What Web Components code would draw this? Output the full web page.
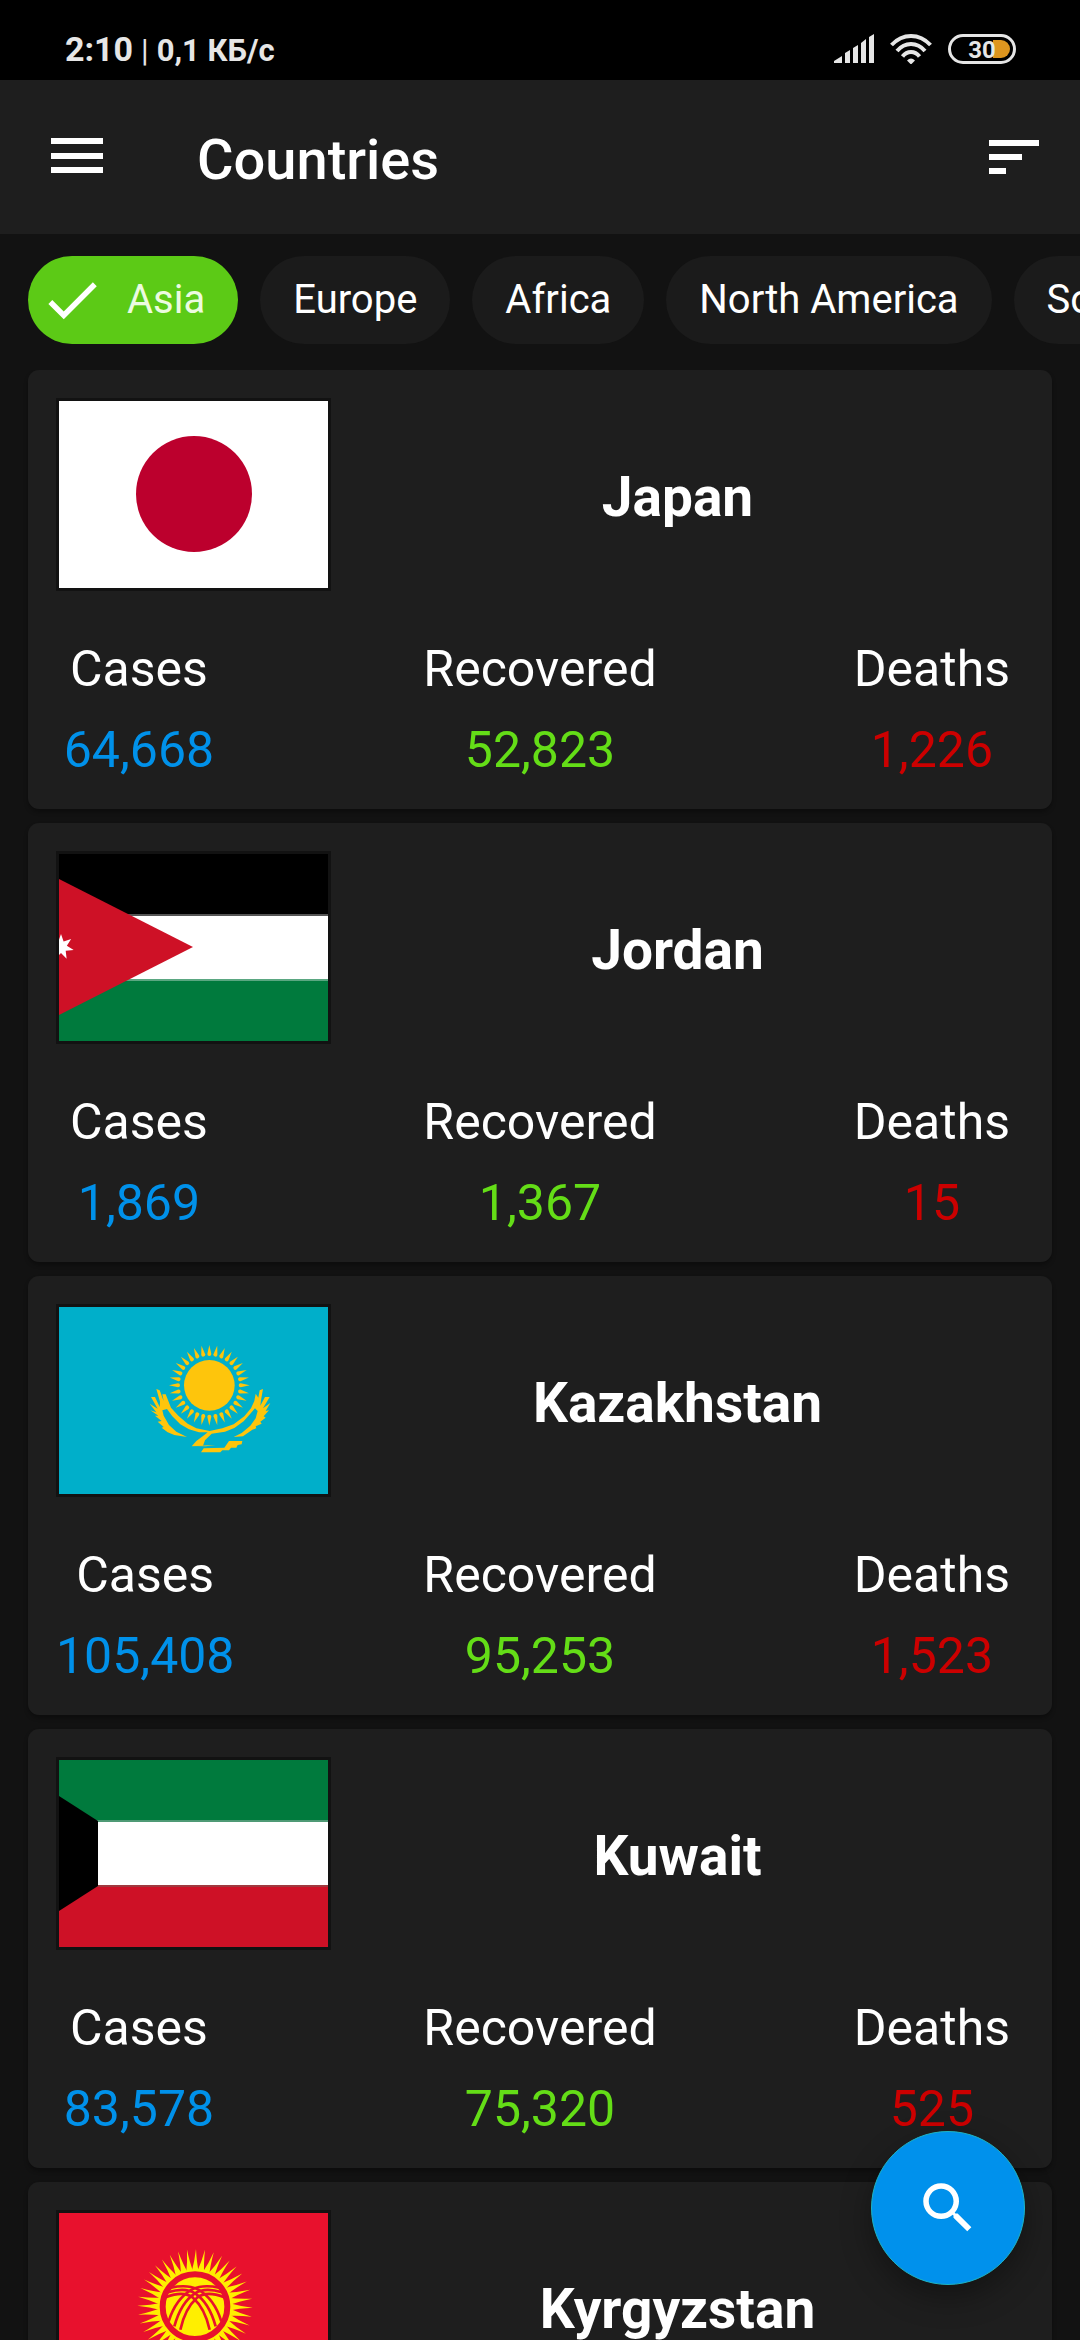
<!DOCTYPE html>
<html lang="en">
<head>
<meta charset="utf-8">
<meta name="viewport" content="width=device-width, initial-scale=1">
<title>Countries</title>
<style>
  :root {
    --bg: #121212;
    --surface: #1e1e1e;
    --chip: #1b1b1b;
    --green: #64dd17;
    --blue: #0091ea;
    --red: #cc0000;
    --edge: 28px;
  }
  html, body { margin: 0; height: 100%; background: var(--bg); }
  body { font-family: Roboto, "Noto Sans", sans-serif; color: #fff; }
</style>
</head>
<body>
<covid-app>
  <status-bar slot="top"></status-bar>
  <app-bar slot="top">Countries</app-bar>
  <chip-row slot="top">
    <region-chip selected>Asia</region-chip>
    <region-chip>Europe</region-chip>
    <region-chip>Africa</region-chip>
    <region-chip>North America</region-chip>
    <region-chip>South America</region-chip>
  </chip-row>
  <country-card flag="jp" cases="64,668" recovered="52,823" deaths="1,226">Japan</country-card>
  <country-card flag="jo" cases="1,869" recovered="1,367" deaths="15">Jordan</country-card>
  <country-card flag="kz" cases="105,408" recovered="95,253" deaths="1,523">Kazakhstan</country-card>
  <country-card flag="kw" cases="83,578" recovered="75,320" deaths="525">Kuwait</country-card>
  <country-card flag="kg" cases="43,245" recovered="39,508" deaths="1,060">Kyrgyzstan</country-card>
  <search-fab slot="fab"></search-fab>
</covid-app>

<script>
  const define = (name, render) => customElements.define(name, class extends HTMLElement {
    connectedCallback() {
      if (this.shadowRoot) return;
      this.attachShadow({ mode: 'open' }).innerHTML = render(this);
    }
  });

  /* ---------- flags ---------- */
  const polar = (cx, cy, r, deg) => {
    const a = deg * Math.PI / 180;
    return (cx + r * Math.sin(a)).toFixed(2) + ' ' + (cy - r * Math.cos(a)).toFixed(2);
  };
  const repeat = (n, fn) => Array.from({ length: n }, (_, i) => fn(i)).join('');

  // seven-pointed star
  const star = 'M' + Array.from({ length: 14 }, (_, i) =>
    polar(2, 93, i % 2 ? 6 : 13, i * 360 / 14)).join('L') + 'Z';

  // tapered rays round the Kazakh sun
  const kzRays = repeat(32, i =>
    `<path transform="rotate(${i * 11.25} 451 235)" d="M451 114L457 141Q457 147 451 147Q445 147 445 141Z"/>`);

  // slightly bent rays round the Kyrgyz sun
  const kgRays = repeat(40, i =>
    `<path transform="rotate(${i * 9} 408 281)" d="M397 180Q407 145 411 108Q413 150 420 180Z"/>`);

  // one set of tunduk laths, mirrored for the other
  const laths = `
    <path d="M329 325Q350 258 398 230Q430 213 480 224"/>
    <path d="M346 340Q366 268 408 241Q438 222 489 238"/>
    <path d="M364 350Q378 286 414 254Q442 232 494 252" />`;

  const flags = {
    jp: `<rect width="269" height="187" fill="#fff"/><circle cx="135" cy="93" r="58" fill="#bc002d"/>`,
    jo: `<rect width="269" height="61" fill="#000"/><rect y="61" width="269" height="65" fill="#fff"/>
         <rect y="126" width="269" height="61" fill="#007a3d"/>
         <path d="M0 60h269v2H0z" fill="#555"/><path d="M0 125h269v2H0z" fill="#5aa781"/>
         <path d="M0 25L134 93L0 161Z" fill="#ce1126"/><path d="${star}" fill="#fff"/>`,
    kz: `<rect width="269" height="187" fill="#00afca"/>
         <g transform="scale(.33333)" fill="#fec50c">
           <circle cx="451" cy="235" r="76"/>${kzRays}
           <path d="M292 246L303 284L302 300L288 270L276 270L296 305L272 290L292 316L274 310L298 326L288 326L308 342L296 344L314 360L308 362L326 376L346 384L384 390L352 374L330 354L314 326L310 310L324 306L340 328L364 352L390 367L420 376L446 376L436 384L412 402L398 418L432 416L438 400L458 380L498 374L526 363L554 343L574 320L588 304L596 312L590 334L574 356L548 378L524 390L552 388L580 368L592 364L590 358L608 350L604 344L620 332L614 328L630 310L620 312L634 288L612 304L632 270L618 270L604 296L606 280L612 246L602 250L598 272L590 260L586 282L576 304L556 328L524 352L490 364L452 372L412 364L386 350L358 326L336 302L320 262L310 262L314 282L302 250Z"/>
           <path d="M400 417L470 414L440 418ZM426 436L434 424L496 422L510 402L550 402L548 412L536 414L532 422L516 422L510 430L490 430L484 436Z"/>
         </g>`,
    kw: `<rect width="269" height="61" fill="#007a3d"/><rect y="61" width="269" height="65" fill="#fff"/>
         <rect y="126" width="269" height="61" fill="#ce1126"/>
         <path d="M0 60h269v2H0z" fill="#4f9a75"/><path d="M0 125h269v2H0z" fill="#a0393f"/>
         <path d="M0 36L39 61V126L0 151Z" fill="#000"/>`,
    kg: `<rect width="269" height="187" fill="#e8112d"/>
         <g transform="scale(.33333)">
           <g fill="#ffef00">${kgRays}<circle cx="408" cy="281" r="107"/></g>
           <circle cx="408" cy="281" r="97" fill="#ffef00" stroke="#e8112d" stroke-width="18"/>
           <g fill="none" stroke="#e8112d" stroke-width="8">${laths}
             <g transform="matrix(-1 0 0 1 816 0)">${laths}</g></g>
         </g>`
  };

  define('country-flag', el => `
    <style>
      :host { display: block; flex: none; border: 3px solid #121212; }
      svg { display: block; width: 269px; height: 187px; }
    </style>
    <svg viewBox="0 0 269 187" aria-hidden="true">${flags[el.getAttribute('code')]}</svg>`);

  /* ---------- frame ---------- */
  define('covid-app', () => `
    <style>
      :host { display: flex; flex-direction: column; height: 100vh; overflow: hidden; background: var(--bg); }
      header { flex: none; }
      main { flex: 1; min-height: 0; overflow-y: auto; scrollbar-width: none;
             display: flex; flex-direction: column; gap: 14px; padding: 0 var(--edge) 14px; }
      ::slotted(search-fab) { position: fixed; right: 55px; bottom: 55px; }
    </style>
    <header><slot name="top"></slot></header>
    <main><slot></slot></main>
    <slot name="fab"></slot>`);

  define('status-bar', () => `
    <style>
      :host { display: flex; align-items: center; justify-content: space-between; height: 80px;
              box-sizing: border-box; padding: 18px 64px 0 65px; background: #000; color: #e6e6e6; font-weight: 700; }
      .left { display: flex; align-items: baseline; gap: 8px; padding-top: 2px; font-size: 31px; line-height: 40px; }
      time { font-size: 34px; }
      .bar { font-weight: 400; }
      .right { display: flex; gap: 16px; }
      svg { display: block; }
    </style>
    <div class="left"><time>2:10</time><span class="bar">|</span><span>0,1 КБ/с</span></div>
    <div class="right">
      <svg width="40" height="30" viewBox="0 0 40 30" fill="#e6e6e6" aria-hidden="true">
        <path d="M0 27l8-5v7H0zM11 19l5-3v13h-5zM19 14l5-3v18h-5zM27 9l5-4v24h-5zM35 3l5-3v29h-5z"/>
      </svg>
      <svg width="42" height="30" viewBox="0 0 42 30" fill="none" stroke="#e6e6e6" stroke-width="4" aria-hidden="true">
        <path d="M1.5 11Q10 2 21 2T40.5 11M7 17Q13 10 21 10T35 17M12.5 22.5Q16 18 21 18T29.5 22.5"/>
        <path d="M17 26.5Q21 22.5 25 26.5L21 30.5Z" fill="#e6e6e6" stroke="none"/>
      </svg>
      <svg width="68" height="30" viewBox="0 0 68 30" aria-label="Battery">
        <rect x="1.5" y="1.5" width="65" height="27" rx="13.5" fill="none" stroke="#e6e6e6" stroke-width="3"/>
        <path d="M45 6h8a9 9 0 0 1 0 18h-8z" fill="#dd961f"/>
        <text x="34" y="24" text-anchor="middle" font-family="Roboto, sans-serif" font-size="24" font-weight="700" fill="#e6e6e6">30</text>
      </svg>
    </div>`);

  define('app-bar', () => `
    <style>
      :host { display: flex; align-items: center; height: 154px; box-sizing: border-box;
              padding: 0 33px 0 44px; background: var(--surface); }
      button { all: unset; display: block; cursor: pointer; }
      svg { display: block; fill: #fff; }
      h1 { flex: 1; margin: 0; padding: 6px 0 0 87px; font-size: 56px; font-weight: 500; line-height: 64px; }
    </style>
    <button aria-label="Menu"><svg width="66" height="66" viewBox="0 0 66 66"><path d="M7 14h52v6H7zM7 29h52v6H7zM7 43h52v6H7z"/></svg></button>
    <h1><slot></slot></h1>
    <button aria-label="Sort"><svg width="66" height="66" viewBox="0 0 66 66"><path d="M8 16h50v6H8zM8 30h33v6H8zM8 44h17v6H8z"/></svg></button>`);

  define('chip-row', () => `
    <style>
      :host { display: flex; gap: 22px; padding: 22px var(--edge) 26px; overflow-x: auto; scrollbar-width: none; }
    </style>
    <slot></slot>`);

  define('region-chip', el => {
    const on = el.hasAttribute('selected');
    return `
    <style>
      :host { display: block; flex: none; }
      button { display: flex; align-items: center; gap: 22px; height: 88px; margin: 0; padding: 0 33px;
               border: 0; border-radius: 44px; background: var(--chip); color: #fff;
               font: 400 40px/46px Roboto, "Noto Sans", sans-serif; white-space: nowrap; }
      button[aria-pressed="true"] { padding-left: 11px; background: #5cca16; color: #ecfbe0; }
      svg { width: 66px; height: 66px; fill: #fff; }
    </style>
    <button aria-pressed="${on}">
      ${on ? '<svg viewBox="0 0 24 24" aria-hidden="true"><path d="M9 16.17L4.83 12l-1.42 1.41L9 19 21 7l-1.41-1.41z"/></svg>' : ''}
      <span><slot></slot></span>
    </button>`;
  });

  define('country-card', el => {
    const stat = (label, key) => `<div class="${key}"><dt>${label}</dt><dd>${el.getAttribute(key)}</dd></div>`;
    return `
    <style>
      :host { display: flex; flex-direction: column; flex: none; gap: 47px; padding: 28px;
              border-radius: 11px; background: var(--surface); box-shadow: 0 3px 4px rgba(0,0,0,.3); }
      .head { display: flex; align-items: center; }
      h2 { flex: 1; margin: 0; padding-top: 4px; text-align: center; font-size: 55px; font-weight: 700; line-height: 64px; }
      dl { display: grid; grid-template-columns: 1fr auto 1fr; margin: 0; font-size: 50px; line-height: 62px; text-align: center; }
      dl div { display: flex; flex-direction: column; gap: 19px; }
      dt { padding: 0 14px; }
      dd { margin: 0; }
      .cases { justify-self: start; }
      .deaths { justify-self: end; }
      .cases dd { color: var(--blue); }
      .recovered dd { color: var(--green); }
      .deaths dd { color: var(--red); }
    </style>
    <div class="head"><country-flag code="${el.getAttribute('flag')}"></country-flag><h2><slot></slot></h2></div>
    <dl>${stat('Cases', 'cases')}${stat('Recovered', 'recovered')}${stat('Deaths', 'deaths')}</dl>`;
  });

  define('search-fab', () => `
    <style>
      :host { display: block; }
      button { display: grid; place-items: center; width: 154px; height: 154px; margin: 0; padding: 0;
               border: 1px solid #1fb5c4; border-radius: 50%; background: #0091ec;
               box-shadow: 0 12px 30px rgba(0,0,0,.35); }
      svg { width: 66px; height: 66px; fill: #fff; }
    </style>
    <button aria-label="Search"><svg viewBox="0 0 24 24"><path d="M15.5 14h-.79l-.28-.27A6.471 6.471 0 0 0 16 9.5 6.5 6.5 0 1 0 9.5 16c1.61 0 3.09-.59 4.23-1.57l.27.28v.79l5 4.99L20.49 19l-4.99-5zm-6 0C7.01 14 5 11.99 5 9.5S7.01 5 9.5 5 14 7.01 14 9.5 11.99 14 9.5 14z"/></svg></button>`);
</script>
</body>
</html>
